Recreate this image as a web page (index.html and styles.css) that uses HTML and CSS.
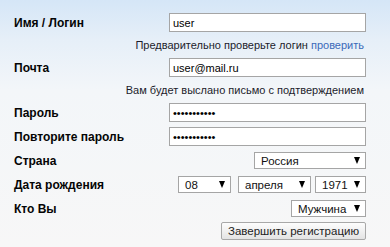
FILE: index.html
```html
<!DOCTYPE html>
<html lang="ru">
<head>
<meta charset="utf-8">
<link rel="stylesheet" href="styles.css">
</head>
<body>
<form class="reg">
  <div class="row">
    <label class="lbl">Имя / Логин</label>
    <input class="field" type="text" value="user">
  </div>
  <div class="hint">Предварительно проверьте логин <a class="link" href="#">проверить</a></div>
  <div class="row">
    <label class="lbl">Почта</label>
    <input class="field" type="text" value="user@mail.ru">
  </div>
  <div class="hint">Вам будет выслано письмо с подтверждением</div>
  <div class="row">
    <label class="lbl">Пароль</label>
    <input class="field" type="password" value="12345678901">
  </div>
  <div class="row gap5">
    <label class="lbl">Повторите пароль</label>
    <input class="field" type="password" value="12345678901">
  </div>
  <div class="row gap6">
    <label class="lbl">Страна</label>
    <div class="sel w-country"><span>Россия</span><i class="arr"></i></div>
  </div>
  <div class="row gap7">
    <label class="lbl">Дата рождения</label>
    <div class="date">
      <div class="sel w-day"><span>08</span><i class="arr"></i></div>
      <div class="sel w-month"><span>апреля</span><i class="arr"></i></div>
      <div class="sel w-year"><span>1971</span><i class="arr"></i></div>
    </div>
  </div>
  <div class="row gap7">
    <label class="lbl">Кто Вы</label>
    <div class="sel w-sex"><span>Мужчина</span><i class="arr"></i></div>
  </div>
  <div class="actions">
    <button class="btn" type="button">Завершить регистрацию</button>
  </div>
</form>
</body>
</html>
```

FILE: styles.css
```css
html, body {
  margin: 0;
  padding: 0;
}
body {
  width: 390px;
  height: 247px;
  overflow: hidden;
  background: linear-gradient(to bottom, #d5e6f7 0px, #e6eff8 40px, #f3f6f9 90px, #f7f7f7 247px);
  font-family: "Liberation Sans", Arial, sans-serif;
  font-size: 11px;
  color: #000;
}
.reg {
  display: flex;
  flex-direction: column;
  padding: 13px 24px 0 14px;
}
.row {
  display: flex;
  justify-content: space-between;
  align-items: center;
}
.gap5 { margin-top: 5px; }
.gap6 { margin-top: 6px; }
.gap7 { margin-top: 7px; }
.lbl {
  font-weight: bold;
  font-size: 12px;
  color: #050505;
}
.field {
  box-sizing: border-box;
  width: 197px;
  height: 19px;
  margin: 0;
  padding: 0 3px;
  border: 1px solid #a5a5a5;
  background: #fff;
  font-family: inherit;
  font-size: 11px;
  color: #000;
  outline: none;
}
.hint {
  height: 26px;
  display: flex;
  align-items: center;
  justify-content: flex-end;
  padding-right: 2px;
  color: #1c1c2c;
  font-size: 11px;
}
.link {
  color: #3a6ab8;
  text-decoration: none;
  margin-left: 3px;
}
.sel {
  box-sizing: border-box;
  height: 17px;
  display: flex;
  align-items: center;
  justify-content: space-between;
  padding: 0 5px 0 6px;
  border: 1px solid #a5a5a5;
  background: #fff;
  font-size: 11.5px;
  color: #111;
}
.arr {
  width: 0;
  height: 0;
  border-left: 3.5px solid transparent;
  border-right: 3.5px solid transparent;
  border-top: 7px solid #000;
}
.w-country { width: 112px; }
.w-sex { width: 75px; }
.date {
  display: flex;
}
.w-day { width: 53px; margin-right: 7px; }
.w-month { width: 73px; margin-right: 4px; }
.w-year { width: 51px; }
.actions {
  display: flex;
  justify-content: flex-end;
  margin-top: 5px;
}
.btn {
  box-sizing: border-box;
  width: 145px;
  height: 18px;
  margin: 0;
  padding: 0;
  border: 1px solid #a8a8a8;
  border-radius: 2px;
  background: linear-gradient(to bottom, #fdfdfd, #e4e4e4);
  font-family: inherit;
  font-size: 11.5px;
  color: #222;
}
```
